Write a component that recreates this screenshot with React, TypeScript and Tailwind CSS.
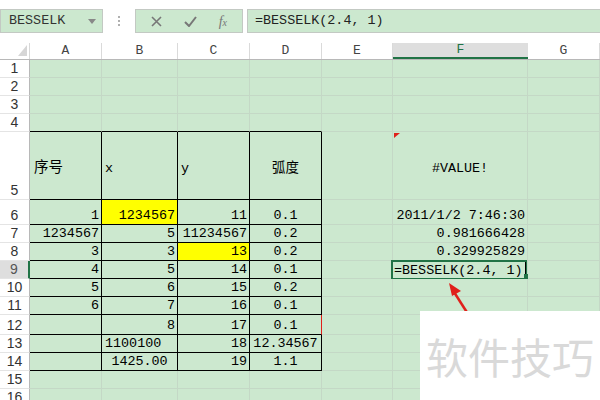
import React from "react";

type Cell = { v?: string; a?: "l" | "r" | "c"; y?: boolean };

const colW = ["w-[72px]", "w-[76px]", "w-[72px]", "w-[72px]", "w-[71px]", "w-[135px]", "w-[72px]"];
const colNames = ["A", "B", "C", "D", "E", "F", "G"];

const e: Cell = {};
const r = (v: string, y = false): Cell => ({ v, a: "r", y });
const c = (v: string): Cell => ({ v, a: "c" });
const l = (v: string): Cell => ({ v, a: "l" });

const rows: { n: number; h: string; cells: Cell[] }[] = [
  { n: 1, h: "h-[18px]", cells: [] },
  { n: 2, h: "h-[18px]", cells: [] },
  { n: 3, h: "h-[18px]", cells: [] },
  { n: 4, h: "h-[18px]", cells: [] },
  { n: 5, h: "h-[68px]", cells: [l("序号"), l("x"), l("y"), c("弧度"), e, c("#VALUE!"), e] },
  { n: 6, h: "h-[25px]", cells: [r("1"), r("1234567", true), r("11"), c("0.1"), e, r("2011/1/2 7:46:30"), e] },
  { n: 7, h: "h-[18px]", cells: [r("1234567"), r("5"), r("11234567"), c("0.2"), e, r("0.981666428"), e] },
  { n: 8, h: "h-[18px]", cells: [r("3"), r("3"), r("13", true), c("0.2"), e, r("0.329925829"), e] },
  { n: 9, h: "h-[18px]", cells: [r("4"), r("5"), r("14"), c("0.1"), e, e, e] },
  { n: 10, h: "h-[18px]", cells: [r("5"), r("6"), r("15"), c("0.2")] },
  { n: 11, h: "h-[18px]", cells: [r("6"), r("7"), r("16"), c("0.1")] },
  { n: 12, h: "h-[20px]", cells: [e, r("8"), r("17"), c("0.1")] },
  { n: 13, h: "h-[18px]", cells: [e, l("1100100"), r("18"), c("12.34567")] },
  { n: 14, h: "h-[18px]", cells: [e, c("1425.00"), r("19"), c("1.1")] },
  { n: 15, h: "h-[18px]", cells: [] },
  { n: 16, h: "h-[18px]", cells: [] },
];

const mono = "font-['Liberation_Mono','Noto_Sans_CJK_SC',monospace]";

const App = () => {
  return (
    <div className={`relative w-[600px] h-[400px] overflow-hidden bg-white text-[13.4px] text-black ${mono}`}>
      {/* toolbar */}
      <div className="flex items-center pt-[9px] h-[43px] items-start">
        <div className="w-[103px] h-[24px] bg-[#cce8cf] border border-[#c3c9c3] flex items-center justify-between pl-[8px] pr-[6px] text-[#333]">
          <span>BESSELK</span>
          <svg width="8" height="5" viewBox="0 0 8 5">
            <path d="M0 0 L8 0 L4 5 Z" fill="#888" />
          </svg>
        </div>
        <div className="w-[32px] h-[24px] flex flex-col items-center justify-center gap-[2px]">
          <span className="w-[2px] h-[2px] bg-[#b0b0b0]" />
          <span className="w-[2px] h-[2px] bg-[#b0b0b0]" />
          <span className="w-[2px] h-[2px] bg-[#b0b0b0]" />
        </div>
        <div className="w-[108px] h-[24px] bg-[#cce8cf] border border-[#c3c9c3] flex items-center justify-around px-[4px]">
          <svg width="11" height="11" viewBox="0 0 11 11">
            <path d="M1 1 L10 10 M10 1 L1 10" stroke="#777" strokeWidth="1.6" />
          </svg>
          <svg width="13" height="11" viewBox="0 0 13 11">
            <path d="M1 6 L5 10 L12 1" stroke="#777" strokeWidth="2" fill="none" />
          </svg>
          <span className="font-['Liberation_Serif',serif] italic text-[14px] text-[#777]">
            f<span className="text-[10px]">x</span>
          </span>
        </div>
        <div className="ml-[4px] flex-1 h-[24px] bg-[#cce8cf] border border-[#c3c9c3] border-r-0 flex items-center pl-[7px] text-[#222]">
          =BESSELK(2.4, 1)
        </div>
      </div>

      {/* column header */}
      <div className="flex h-[17px] border-b border-[#b8b8b8]">
        <div className="relative w-[30px] border-r border-[#d8d8d8]">
          <svg className="absolute right-[2px] bottom-[3px]" width="9" height="11" viewBox="0 0 9 11">
            <path d="M9 0 L9 11 L0 11 Z" fill="#d6d6d6" />
          </svg>
        </div>
        {colNames.map((n, i) => (
          <div
            key={n}
            className={`${colW[i]} flex items-center justify-center text-[13px] ${
              n === "F" ? "bg-[#dedede] border-b-2 border-[#217346] text-[#217346]" : "border-r border-[#dadada] text-[#444]"
            }`}
          >
            {n}
          </div>
        ))}
      </div>

      {/* rows */}
      {rows.map((row) => (
        <div key={row.n} className={`flex ${row.h}`}>
          <div
            className={`w-[30px] shrink-0 flex items-end justify-center font-['Liberation_Sans',sans-serif] text-[14px] leading-[18px] border-b border-[#e4e4e4] ${
              row.n === 9 ? "bg-[#dedede] border-r-2 border-r-[#217346] text-[#555]" : "border-r border-r-[#b8b8b8] text-[#333]"
            }`}
          >
            {row.n}
          </div>
          {colNames.map((_, i) => {
            const cell = row.cells[i] || {};
            const inTable = i < 4 && row.n >= 5 && row.n <= 14;
            const topOfTable = i < 4 && row.n === 4;
            const right = inTable ? (row.n === 12 && i === 3 ? "border-r-[#e0201b]" : "border-r-black") : "border-r-[#c4d8c6]";
            const bottom = inTable || topOfTable ? "border-b-black" : "border-b-[#c4d8c6]";
            const align = cell.a === "r" ? "justify-end pr-[2px]" : cell.a === "c" ? "justify-center" : "justify-start pl-[3px]";
            const valign = row.n === 5 ? "items-center pt-[6px]" : "items-end";
            return (
              <div
                key={i}
                className={`relative shrink-0 ${colW[i]} border-r border-b ${right} ${bottom} ${cell.y ? "bg-[#ffff00]" : "bg-[#cce8cf]"} flex ${valign} ${align} leading-[17px] whitespace-nowrap ${
                  i === 0 && row.n === 5 ? "text-[14.5px] pl-[4px]" : ""
                }`}
              >
                {cell.v}
                {row.n === 5 && i === 5 && (
                  <svg className="absolute left-[1px] top-[1px]" width="6" height="5" viewBox="0 0 6 5">
                    <path d="M0 0 L6 0 L0 5 Z" fill="#e0201b" />
                  </svg>
                )}
                {row.n === 9 && i === 5 && (
                  <div className="absolute left-[-2px] top-[-1px] w-[136px] h-[20px] border-2 border-[#217346] flex items-center pl-[1px]">
                    <span>=BESSELK(2.4, 1)</span>
                    <span className="ml-[2px] w-[1px] h-[16px] bg-black" />
                    <span className="absolute right-[-4px] bottom-[-3px] w-[5px] h-[7px] bg-[#217346]" />
                  </div>
                )}
              </div>
            );
          })}
        </div>
      ))}

      {/* red arrow */}
      <svg className="absolute left-[440px] top-[278px]" width="40" height="40" viewBox="0 0 40 40">
        <path d="M28 36 L14 14" stroke="#e0201b" strokeWidth="2.5" />
        <path d="M9 5 L21 13 L12 18 Z" fill="#e0201b" />
      </svg>

      {/* watermark */}
      <div className="absolute left-[420px] top-[311px] w-[180px] h-[89px] bg-white flex items-center pl-[6px]">
        <span className="font-['Noto_Sans_CJK_SC',sans-serif] text-[42px] leading-none text-[#d9d9d9] whitespace-nowrap">
          软件技巧
        </span>
      </div>
    </div>
  );
};

export default App;
